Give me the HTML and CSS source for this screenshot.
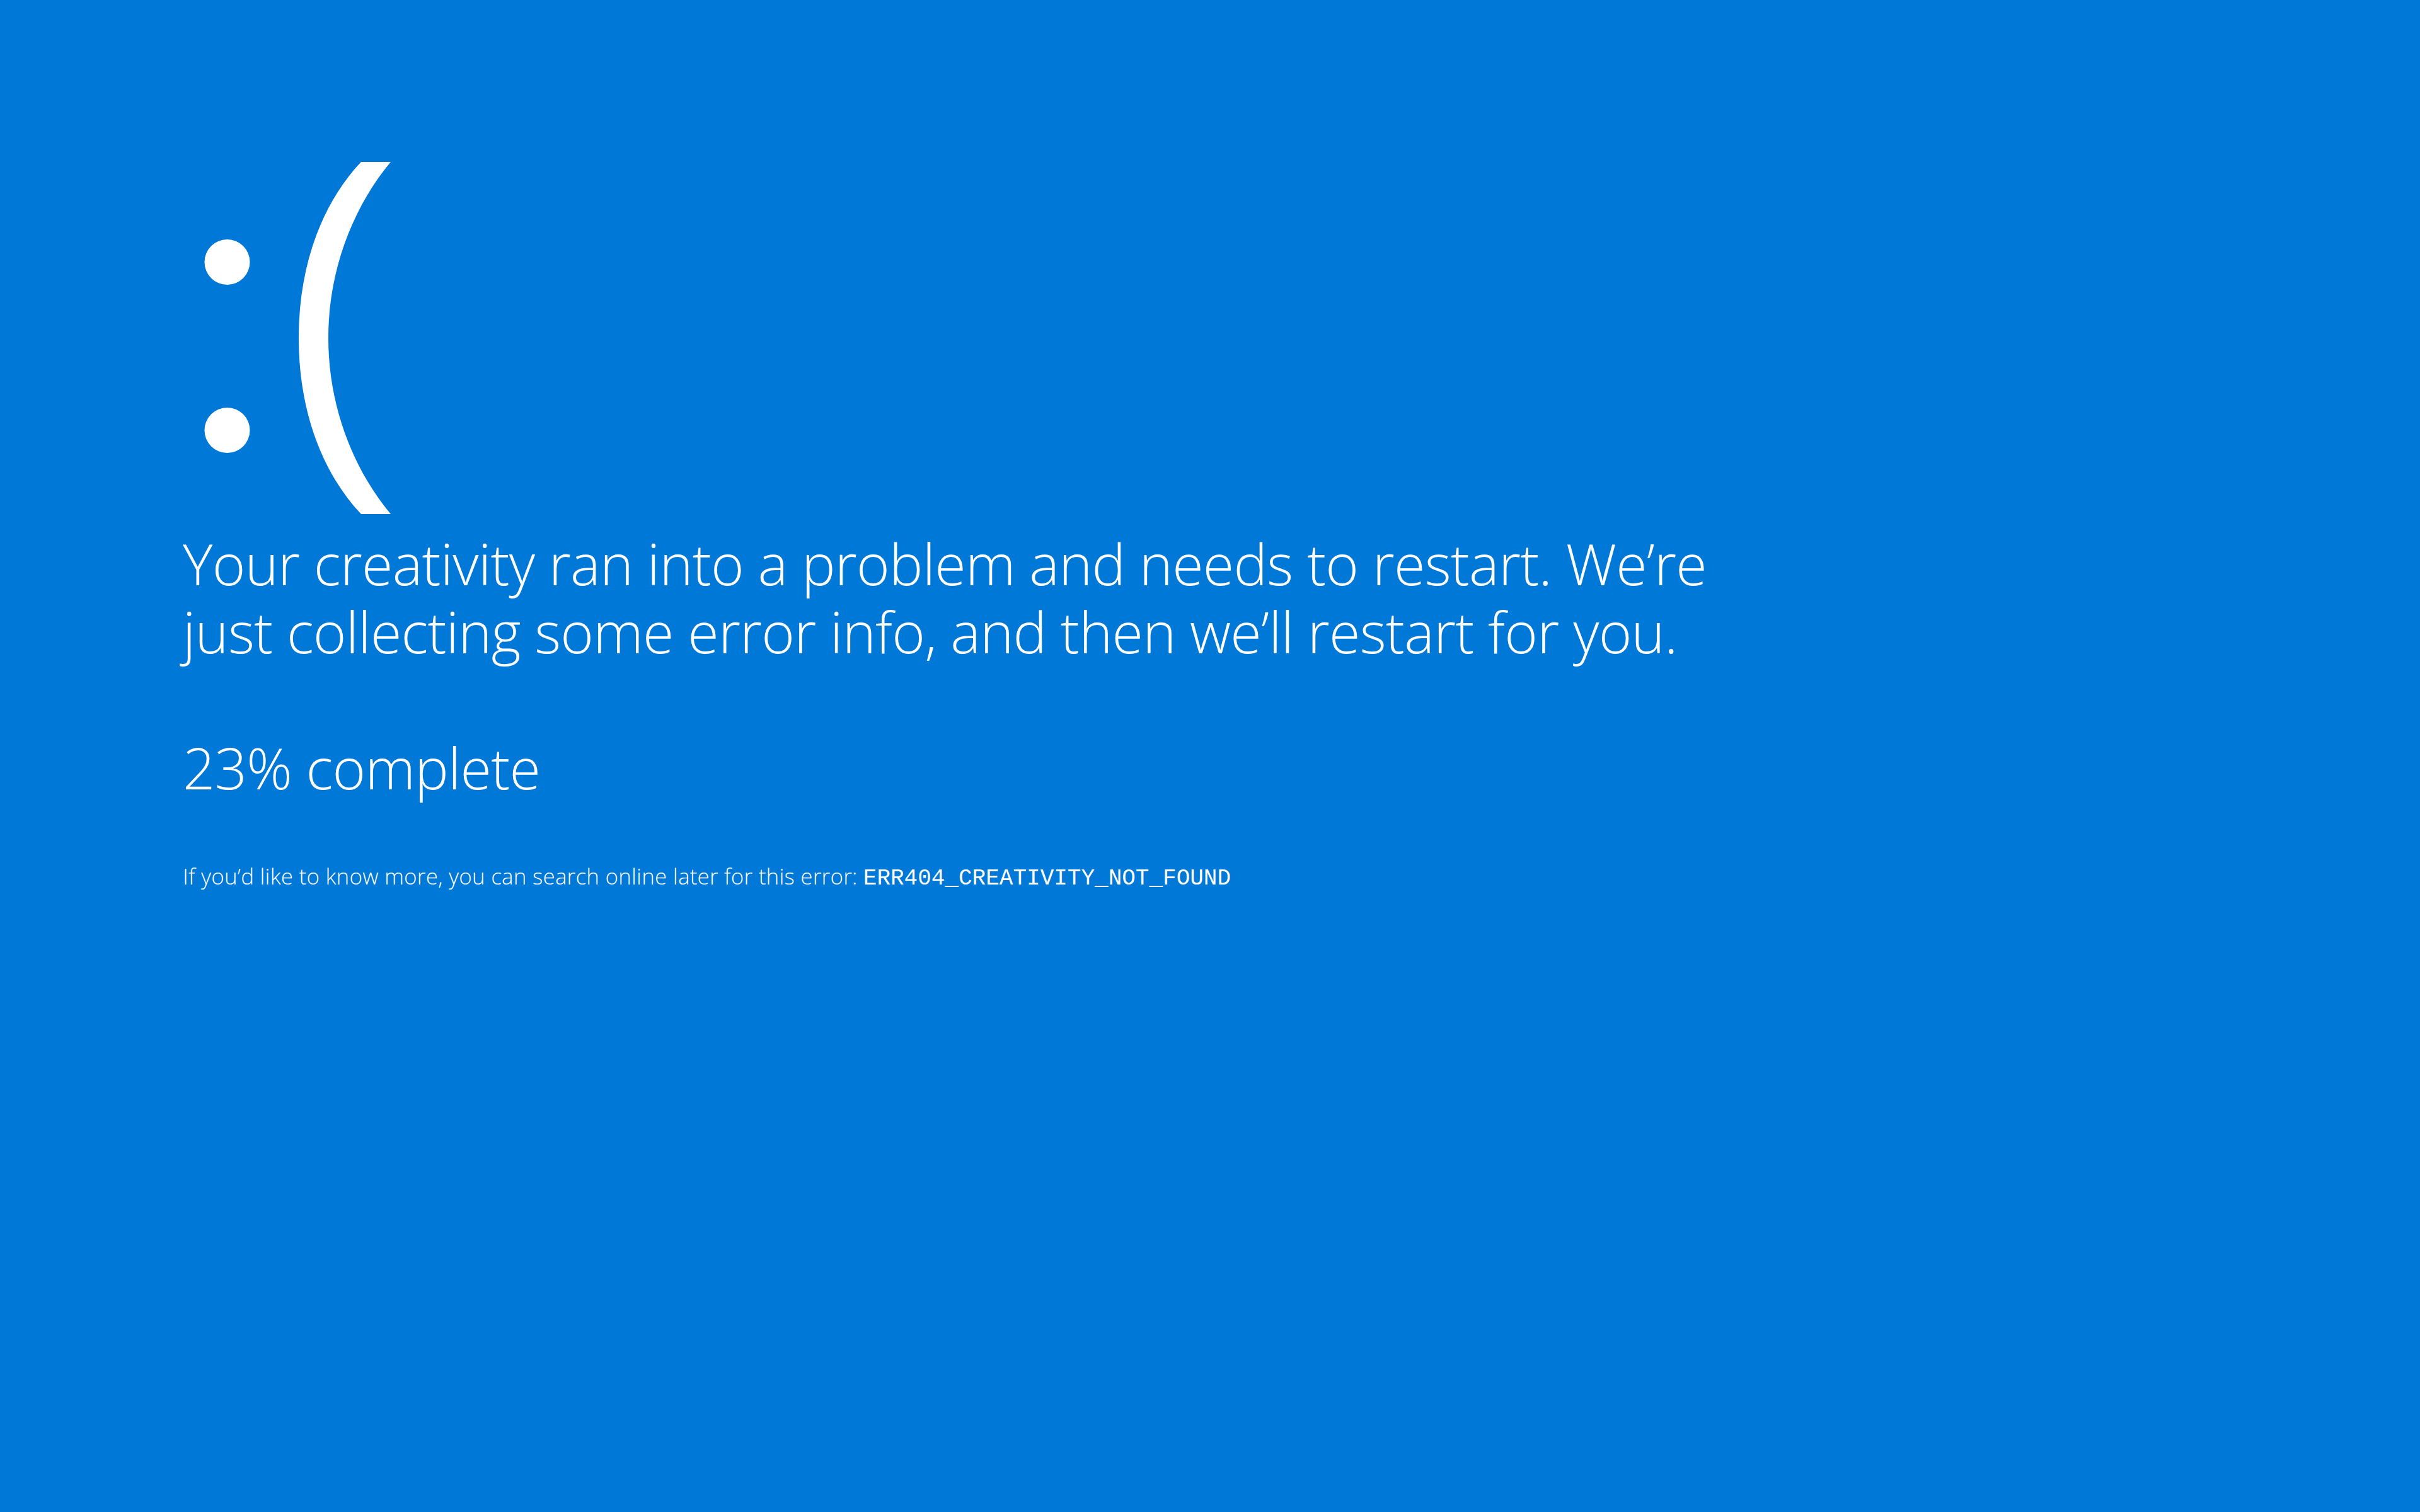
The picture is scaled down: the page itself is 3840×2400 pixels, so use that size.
FILE: index.html
```html
<!DOCTYPE html>
<html lang="en">
<head>
  <meta charset="UTF-8" />
  <meta name="viewport" content="width=device-width, initial-scale=1.0"/>
  <title>Your creativity ran into a problem</title>
  <link rel="stylesheet" href="styles.css">
</head>
<body>
  <div class="screen">
    <svg class="face" width="300" height="560" viewBox="0 0 300 560">
      <circle cx="38.5" cy="159" r="36" fill="#fff"/>
      <circle cx="38.5" cy="426" r="36" fill="#fff"/>
      <path fill="#fff" d="M298 0 C238 72 199 172 199 279.5 C199 387 238 487 298 559 H251 C185 489 152 388 152 279.5 C152 171 185 70 251 0 Z"/>
    </svg>

    <p class="message">Your creativity ran into a problem and needs to restart. We’re<br>just collecting some error info, and then we’ll restart for you.</p>

    <p class="progress">23% complete</p>

    <p class="details">If you’d like to know more, you can search online later for this error: <span class="code">ERR404_CREATIVITY_NOT_FOUND</span></p>
  </div>
</body>
</html>
```

FILE: styles.css
```css
body {
  margin: 0;
  background: #0078D7;
  color: #FFFFFF;
  font-family: 'Open Sans', 'Noto Sans', sans-serif;
  font-weight: 300;
}

.screen {
  min-height: 2400px;
  box-sizing: border-box;
  padding: 257px 0 0 290px;
}

.face {
  display: block;
  margin-left: 32px;
}

.message {
  margin: 23px 0 0;
  font-size: 90px;
  line-height: 108px;
  letter-spacing: -0.8px;
  white-space: nowrap;
}

.progress {
  margin: 108px 0 0;
  font-size: 90px;
  line-height: 108px;
  letter-spacing: -0.8px;
}

.details {
  margin: 95px 0 0;
  font-size: 35px;
  line-height: 48px;
  letter-spacing: 0.2px;
}

.code {
  font-family: 'Liberation Mono', 'DejaVu Sans Mono', monospace;
  font-weight: 400;
  font-size: 36px;
  letter-spacing: 0;
}
```
